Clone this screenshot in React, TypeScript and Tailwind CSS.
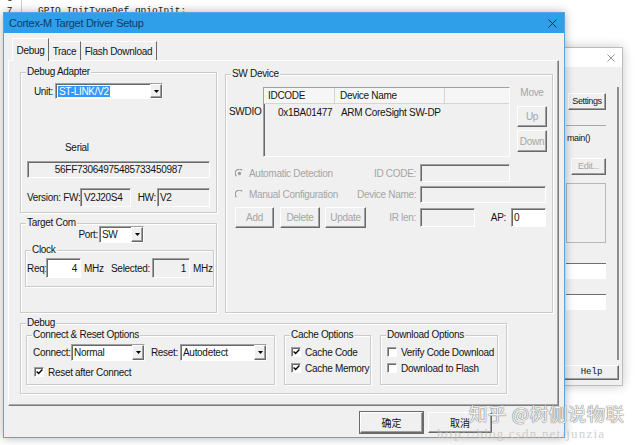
import React from "react";

const SUNKEN =
  "border border-t-[#a0a0a0] border-l-[#a0a0a0] border-r-white border-b-white shadow-[inset_1px_1px_0_#696969]";
const RAISED =
  "border border-t-white border-l-white border-r-[#696969] border-b-[#696969] shadow-[inset_-1px_-1px_0_#a0a0a0]";
const GROUP =
  "border border-[#cbcbcb] shadow-[inset_1px_1px_0_#ffffff,1px_1px_0_#ffffff]";
const LEG = "ml-[5px] px-[1px] leading-[12px] bg-[#f0f0f0]";

type P = { className?: string; children?: React.ReactNode };

const Arrow = () => (
  <svg width="5" height="3" viewBox="0 0 5 3">
    <path d="M0 0H5L2.5 3Z" fill="#000" />
  </svg>
);

const Select = ({ className = "", children }: P) => (
  <div className={`flex items-stretch bg-white ${SUNKEN} ${className}`}>
    <div className="flex-1 flex items-center pl-[2px] overflow-hidden whitespace-nowrap">
      {children}
    </div>
    <div className={`w-[12px] flex items-center justify-center bg-[#f0f0f0] ${RAISED}`}>
      <Arrow />
    </div>
  </div>
);

const Btn = ({
  className = "",
  children,
  disabled,
}: P & { disabled?: boolean }) => (
  <div
    className={`flex items-center justify-center bg-[#f0f0f0] ${RAISED} ${
      disabled ? "text-[#a5a5a5]" : ""
    } ${className}`}
  >
    {children}
  </div>
);

const Check = ({ checked }: { checked?: boolean }) => (
  <span className={`w-[10px] h-[10px] shrink-0 bg-white ${SUNKEN} flex items-center justify-center`}>
    {checked && (
      <svg width="7" height="6" viewBox="0 0 7 6">
        <path d="M0.6 2.6L2.6 4.6L6.4 0.6" stroke="#000" strokeWidth="1.4" fill="none" />
      </svg>
    )}
  </span>
);

const Radio = ({ checked }: { checked?: boolean }) => (
  <svg width="9" height="9" viewBox="0 0 9 9" className="shrink-0">
    <path d="M1.4 7.2 A3.8 3.8 0 0 1 7.2 1.4" stroke="#9c9c9c" strokeWidth="1.3" fill="none" />
    {checked && <circle cx="4.5" cy="4.5" r="1.7" fill="#9c9c9c" />}
  </svg>
);

const X = ({ color, size = 9 }: { color: string; size?: number }) => (
  <svg width={size} height={size} viewBox="0 0 9 9">
    <path d="M0.5 0.5L8.5 8.5M8.5 0.5L0.5 8.5" stroke={color} strokeWidth="1" />
  </svg>
);

export default function App() {
  return (
    <div className="relative w-[640px] h-[445px] overflow-hidden bg-white font-['Liberation_Sans',Arial,sans-serif] text-[10px] tracking-[-0.3px] text-[#141414]">
      {/* background code editor */}
      <div className="absolute left-0 top-[-7px] flex font-['Liberation_Mono',monospace] text-[9.5px] leading-[12px] text-[#222] tracking-normal">
        <div className="w-[22px] h-[19px] border-r border-[#cfcfcf] flex flex-col items-center pr-[2px]">
          <span>6</span>
          <span>7</span>
        </div>
        <div className="pl-[16px] flex flex-col">
          <span>&nbsp;</span>
          <span>GPIO_InitTypeDef gpioInit;</span>
        </div>
      </div>

      {/* background dialog on the right */}
      <div className="absolute left-[531px] top-[47px] w-[92px] h-[339px] bg-[#f0f0f0] border border-[#bdbdbd] shadow-[0_0_10px_rgba(0,0,0,0.22)] flex flex-col">
        <div className="h-[19px] bg-white flex items-center justify-end pr-[7px]">
          <X color="#8a8a8a" size={8} />
        </div>
        <div className="mt-[20px] h-[273px] w-[87px] border-r-2 border-[#8f8f8f] flex flex-col">
          <Btn className="ml-[36px] mt-[6px] w-[38px] h-[17px] text-[9px] tracking-[-0.4px]">Settings</Btn>
          <div className="ml-[34px] mt-[15px] w-[40px] h-0 border-t border-[#a8a8a8]" />
          <div className="ml-[35px] mt-[6px] h-[12px] leading-[12px] text-[9px] tracking-[-0.4px]">main()</div>
          <Btn disabled className="ml-[39px] mt-[14px] w-[35px] h-[17px] text-[9px]">
            Edit...
          </Btn>
          <div className="ml-[34px] mt-[8px] w-[40px] h-[60px] border border-[#b8b8b8]" />
          <div className="ml-[34px] mt-[20px] w-[40px] h-[16px] bg-white border-t border-[#6f6f6f]" />
          <div className="ml-[34px] mt-[15px] w-[40px] h-[16px] bg-white border-t border-[#6f6f6f]" />
        </div>
        <Btn className="ml-[32px] mt-[5px] w-[55px] h-[15px] font-['Liberation_Mono',monospace] text-[9px] tracking-normal">
          Help
        </Btn>
      </div>

      {/* main dialog */}
      <div className="absolute left-[3px] top-[12px] w-[562px] h-[426px] flex flex-col bg-[#f0f0f0] border border-[#55a6e2] shadow-[0_0_9px_rgba(0,0,0,0.3)]">
        <div className="h-[20px] shrink-0 bg-[#2f9fea] flex items-center justify-between pl-[5px] pr-[7px] text-[11px] text-[#143863]">
          <span>Cortex-M Target Driver Setup</span>
          <X color="#17304f" />
        </div>

        {/* tabs */}
        <div className="mt-[5px] h-[22px] shrink-0 flex items-end pl-[8px]">
          <div className="relative z-10 -mb-px w-[37px] h-[23px] flex items-center justify-center bg-[#f0f0f0] border-t border-l border-t-white border-l-white border-r border-r-[#696969]">
            Debug
          </div>
          <div className="w-[32px] h-[19px] flex items-center justify-center border-t border-t-white border-r border-r-[#696969]">
            Trace
          </div>
          <div className="w-[76px] h-[19px] flex items-center justify-center border-t border-t-white border-r border-r-[#696969]">
            Flash Download
          </div>
        </div>

        {/* tab panel */}
        <div className="ml-[4px] w-[551px] h-[346px] shrink-0 flex flex-col pl-[11px] pt-[5px] border border-t-white border-l-white border-r-[#7c7c7c] border-b-[#7c7c7c] shadow-[inset_-1px_-1px_0_#a9a9a9]">
          <div className="flex items-start gap-[8px]">
            {/* left column */}
            <div className="w-[197px] flex flex-col">
              <fieldset className={`${GROUP} h-[147px]`}>
                <legend className={LEG}>Debug Adapter</legend>
                <div className="flex items-center mt-[5px] h-[16px]">
                  <div className="w-[34px] text-right pr-[2px]">Unit:</div>
                  <Select className="w-[108px] h-[16px]">
                    <span className="bg-[#3399ff] text-white px-[1px] leading-[11px]">ST-LINK/V2</span>
                  </Select>
                </div>
                <div className="mt-[43px] h-[12px] leading-[12px] pl-[44px]">Serial</div>
                <div className={`mt-[7px] ml-[6px] w-[183px] h-[17px] flex items-center justify-center ${SUNKEN}`}>
                  56FF73064975485733450987
                </div>
                <div className="mt-[10px] h-[19px] flex items-center">
                  <div className="ml-[6px] w-[53px] whitespace-nowrap">Version: FW:</div>
                  <div className={`w-[51px] h-[19px] flex items-center pl-[3px] ${SUNKEN}`}>V2J20S4</div>
                  <div className="w-[26px] text-right pr-[1px]">HW:</div>
                  <div className={`w-[53px] h-[19px] flex items-center pl-[2px] ${SUNKEN}`}>V2</div>
                </div>
              </fieldset>

              <fieldset className={`${GROUP} mt-[4px] h-[96px]`}>
                <legend className={LEG}>Target Com</legend>
                <div className="-mt-[3px] h-[17px] flex items-center">
                  <div className="w-[78px] text-right pr-[1px]">Port:</div>
                  <Select className="w-[45px] h-[17px]">SW</Select>
                </div>
                <fieldset className={`${GROUP} mt-[1px] ml-[4px] w-[189px] h-[43px]`}>
                  <legend className={LEG}>Clock</legend>
                  <div className="mt-[2px] h-[20px] flex items-center">
                    <div className="w-[20px] pl-[1px]">Req:</div>
                    <div className={`w-[35px] h-[20px] bg-white flex items-center justify-end pr-[3px] ${SUNKEN}`}>4</div>
                    <div className="ml-[3px] w-[27px]">MHz</div>
                    <div className="w-[41px]">Selected:</div>
                    <div className={`w-[38px] h-[20px] flex items-center justify-end pr-[3px] ${SUNKEN}`}>1</div>
                    <div className="ml-[3px]">MHz</div>
                  </div>
                </fieldset>
              </fieldset>
            </div>

            {/* SW Device */}
            <fieldset className={`${GROUP} mt-[2px] w-[328px] h-[245px]`}>
              <legend className={LEG}>SW Device</legend>
              <div className="flex mt-[7px] h-[70px]">
                <div className="w-[37px] pl-[3px] pt-[19px] leading-[12px]">SWDIO</div>
                <div className={`w-[247px] h-[70px] flex flex-col ${SUNKEN}`}>
                  <div className="h-[16px] flex bg-[#f6f6f6] border-b border-[#d5d5d5]">
                    <div className="w-[71px] pl-[4px] flex items-center border-r border-[#d5d5d5]">IDCODE</div>
                    <div className="w-[110px] pl-[5px] flex items-center border-r border-[#d5d5d5]">Device Name</div>
                  </div>
                  <div className="h-[16px] flex items-center">
                    <div className="w-[71px] pl-[14px]">0x1BA01477</div>
                    <div className="pl-[6px] whitespace-nowrap">ARM CoreSight SW-DP</div>
                  </div>
                </div>
                <div className="ml-[7px] w-[30px] flex flex-col">
                  <div className="h-[12px] leading-[12px] text-center text-[#a5a5a5]">Move</div>
                  <Btn disabled className="mt-[7px] h-[21px]">Up</Btn>
                  <Btn disabled className="mt-[3px] h-[22px]">Down</Btn>
                </div>
              </div>

              <div className="flex items-center mt-[7px] h-[18px] text-[#a5a5a5]">
                <div className="w-[131px] pl-[9px] flex items-center gap-[5px] whitespace-nowrap">
                  <Radio checked />
                  Automatic Detection
                </div>
                <div className="w-[59px] text-right">ID CODE:</div>
                <div className={`ml-[4px] w-[90px] h-[18px] ${SUNKEN}`} />
              </div>
              <div className="flex items-center mt-[4px] h-[17px] text-[#a5a5a5]">
                <div className="w-[131px] pl-[9px] flex items-center gap-[5px] whitespace-nowrap">
                  <Radio />
                  Manual Configuration
                </div>
                <div className="w-[59px] text-right whitespace-nowrap">Device Name:</div>
                <div className={`ml-[4px] w-[126px] h-[17px] ${SUNKEN}`} />
              </div>
              <div className="flex items-center mt-[4px] h-[21px]">
                <div className="w-[140px] pl-[9px] flex items-center">
                  <Btn disabled className="w-[39px] h-[21px]">Add</Btn>
                  <Btn disabled className="ml-[6px] w-[40px] h-[21px]">Delete</Btn>
                  <Btn disabled className="ml-[5px] w-[41px] h-[21px]">Update</Btn>
                </div>
                <div className="w-[50px] text-right text-[#a5a5a5]">IR len:</div>
                <div className={`ml-[4px] w-[55px] h-[19px] ${SUNKEN}`} />
                <div className="w-[36px] text-right pr-[5px]">AP:</div>
                <div className={`w-[35px] h-[19px] bg-white flex items-center pl-[2px] ${SUNKEN}`}>0</div>
              </div>
            </fieldset>
          </div>

          {/* Debug options */}
          <fieldset className={`${GROUP} mt-[4px] w-[487px] h-[77px]`}>
            <legend className={LEG}>Debug</legend>
            <div className="flex items-start pl-[5px] gap-[9px]">
              <fieldset className={`${GROUP} w-[249px] h-[56px]`}>
                <legend className={LEG}>Connect &amp; Reset Options</legend>
                <div className="flex items-center mt-[3px] h-[17px]">
                  <div className="w-[44px] pl-[6px]">Connect:</div>
                  <Select className="w-[74px] h-[17px]">Normal</Select>
                  <div className="w-[35px] text-right pr-[2px]">Reset:</div>
                  <Select className="w-[87px] h-[17px]">Autodetect</Select>
                </div>
                <div className="flex items-center mt-[5px] h-[12px] pl-[7px] gap-[4px] whitespace-nowrap">
                  <Check checked />
                  Reset after Connect
                </div>
              </fieldset>
              <fieldset className={`${GROUP} w-[87px] h-[56px]`}>
                <legend className={LEG}>Cache Options</legend>
                <div className="flex items-center mt-[5px] h-[12px] pl-[6px] gap-[4px] whitespace-nowrap">
                  <Check checked />
                  Cache Code
                </div>
                <div className="flex items-center mt-[4px] h-[12px] pl-[6px] gap-[4px] whitespace-nowrap">
                  <Check checked />
                  Cache Memory
                </div>
              </fieldset>
              <fieldset className={`${GROUP} w-[118px] h-[56px]`}>
                <legend className={LEG}>Download Options</legend>
                <div className="flex items-center mt-[5px] h-[12px] pl-[6px] gap-[4px] whitespace-nowrap overflow-hidden w-[114px]">
                  <Check />
                  Verify Code Download
                </div>
                <div className="flex items-center mt-[4px] h-[12px] pl-[6px] gap-[4px] whitespace-nowrap">
                  <Check />
                  Download to Flash
                </div>
              </fieldset>
            </div>
          </fieldset>
        </div>

        {/* bottom buttons */}
        <div className="flex mt-[6px] pl-[356px] gap-[5px] font-['Noto_Sans_CJK_SC',sans-serif] tracking-normal">
          <Btn className="w-[63px] h-[21px] outline outline-1 outline-[#6a6a6a]">确定</Btn>
          <Btn className="w-[64px] h-[21px]">取消</Btn>
        </div>
      </div>

      {/* watermark */}
      <div className="absolute left-[437px] top-[424px] font-['Liberation_Serif',serif] text-[13px] tracking-[1.2px] text-[#bdbdbd] opacity-70 whitespace-nowrap">
        http://blog.csdn.net/junzia
      </div>
      <div className="absolute left-[469px] top-[401px] font-['Noto_Sans_CJK_SC',sans-serif] text-[18.5px] leading-[24px] tracking-[0.5px] text-[#f2f2f2] whitespace-nowrap [text-shadow:0_0_1px_#6b6b6b,0_0_1px_#6b6b6b]">
        知乎 @树侧说物联
      </div>
    </div>
  );
}
